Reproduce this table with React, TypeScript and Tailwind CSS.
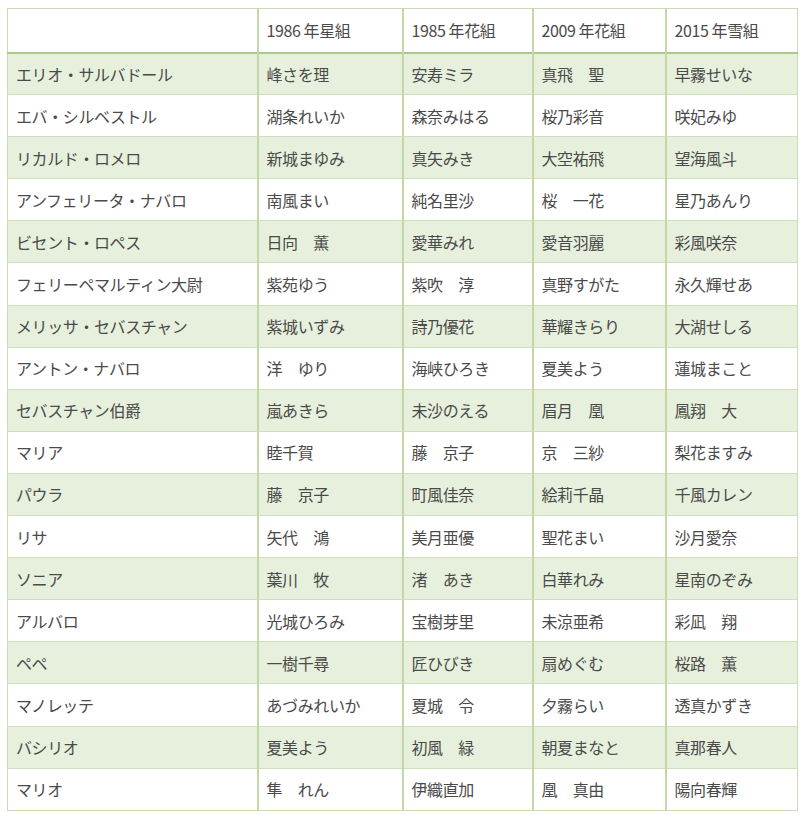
import React from 'react';

const headers = ['', '1986 年星組', '1985 年花組', '2009 年花組', '2015 年雪組'];

// full-width spaces between family and given names, as in the source table
const rows: string[][] = [
  ['エリオ・サルバドール', '峰さを理', '安寿ミラ', '真飛　聖', '早霧せいな'],
  ['エバ・シルベストル', '湖条れいか', '森奈みはる', '桜乃彩音', '咲妃みゆ'],
  ['リカルド・ロメロ', '新城まゆみ', '真矢みき', '大空祐飛', '望海風斗'],
  ['アンフェリータ・ナバロ', '南風まい', '純名里沙', '桜　一花', '星乃あんり'],
  ['ビセント・ロペス', '日向　薫', '愛華みれ', '愛音羽麗', '彩風咲奈'],
  ['フェリーペマルティン大尉', '紫苑ゆう', '紫吹　淳', '真野すがた', '永久輝せあ'],
  ['メリッサ・セバスチャン', '紫城いずみ', '詩乃優花', '華耀きらり', '大湖せしる'],
  ['アントン・ナバロ', '洋　ゆり', '海峡ひろき', '夏美よう', '蓮城まこと'],
  ['セバスチャン伯爵', '嵐あきら', '未沙のえる', '眉月　凰', '鳳翔　大'],
  ['マリア', '睦千賀', '藤　京子', '京　三紗', '梨花ますみ'],
  ['パウラ', '藤　京子', '町風佳奈', '絵莉千晶', '千風カレン'],
  ['リサ', '矢代　鴻', '美月亜優', '聖花まい', '沙月愛奈'],
  ['ソニア', '葉川　牧', '渚　あき', '白華れみ', '星南のぞみ'],
  ['アルバロ', '光城ひろみ', '宝樹芽里', '未涼亜希', '彩凪　翔'],
  ['ペペ', '一樹千尋', '匠ひびき', '扇めぐむ', '桜路　薫'],
  ['マノレッテ', 'あづみれいか', '夏城　令', '夕霧らい', '透真かずき'],
  ['バシリオ', '夏美よう', '初風　緑', '朝夏まなと', '真那春人'],
  ['マリオ', '隼　れん', '伊織直加', '凰　真由', '陽向春輝'],
];

const colWidths = ['w-[250px]', 'w-[145px]', 'w-[130px]', 'w-[133px]', 'w-[132px]'];

const App: React.FC = () => {
  return (
    <div className="w-[800px] h-[819px] bg-white pt-[8px] pl-[7px] font-['Noto_Sans_CJK_JP','Noto_Sans',sans-serif] text-[#4a4a4a]">
      <table className="w-[790px] table-fixed border-collapse border border-[#c9dcb2] text-[16px] leading-none">
        <colgroup>
          {colWidths.map((w, i) => (
            <col key={i} className={w} />
          ))}
        </colgroup>
        <thead>
          <tr className="h-[44px] bg-white border-b-2 border-[#acc986]">
            {headers.map((h, i) => (
              <th
                key={i}
                className="px-[8px] text-left font-normal border-l-2 first:border-l-0 border-[#c3d8a6] tracking-tight"
              >
                {h}
              </th>
            ))}
          </tr>
        </thead>
        <tbody>
          {rows.map((r, ri) => (
            <tr
              key={ri}
              className={`h-[42.1px] border-t border-[#cfe0bb] ${ri % 2 === 0 ? 'bg-[#e7f0dc]' : 'bg-white'}`}
            >
              {r.map((c, ci) => (
                <td
                  key={ci}
                  className="px-[8px] whitespace-nowrap border-l-2 first:border-l-0 border-[#c3d8a6] tracking-tight"
                >
                  {c}
                </td>
              ))}
            </tr>
          ))}
        </tbody>
      </table>
    </div>
  );
};

export default App;
